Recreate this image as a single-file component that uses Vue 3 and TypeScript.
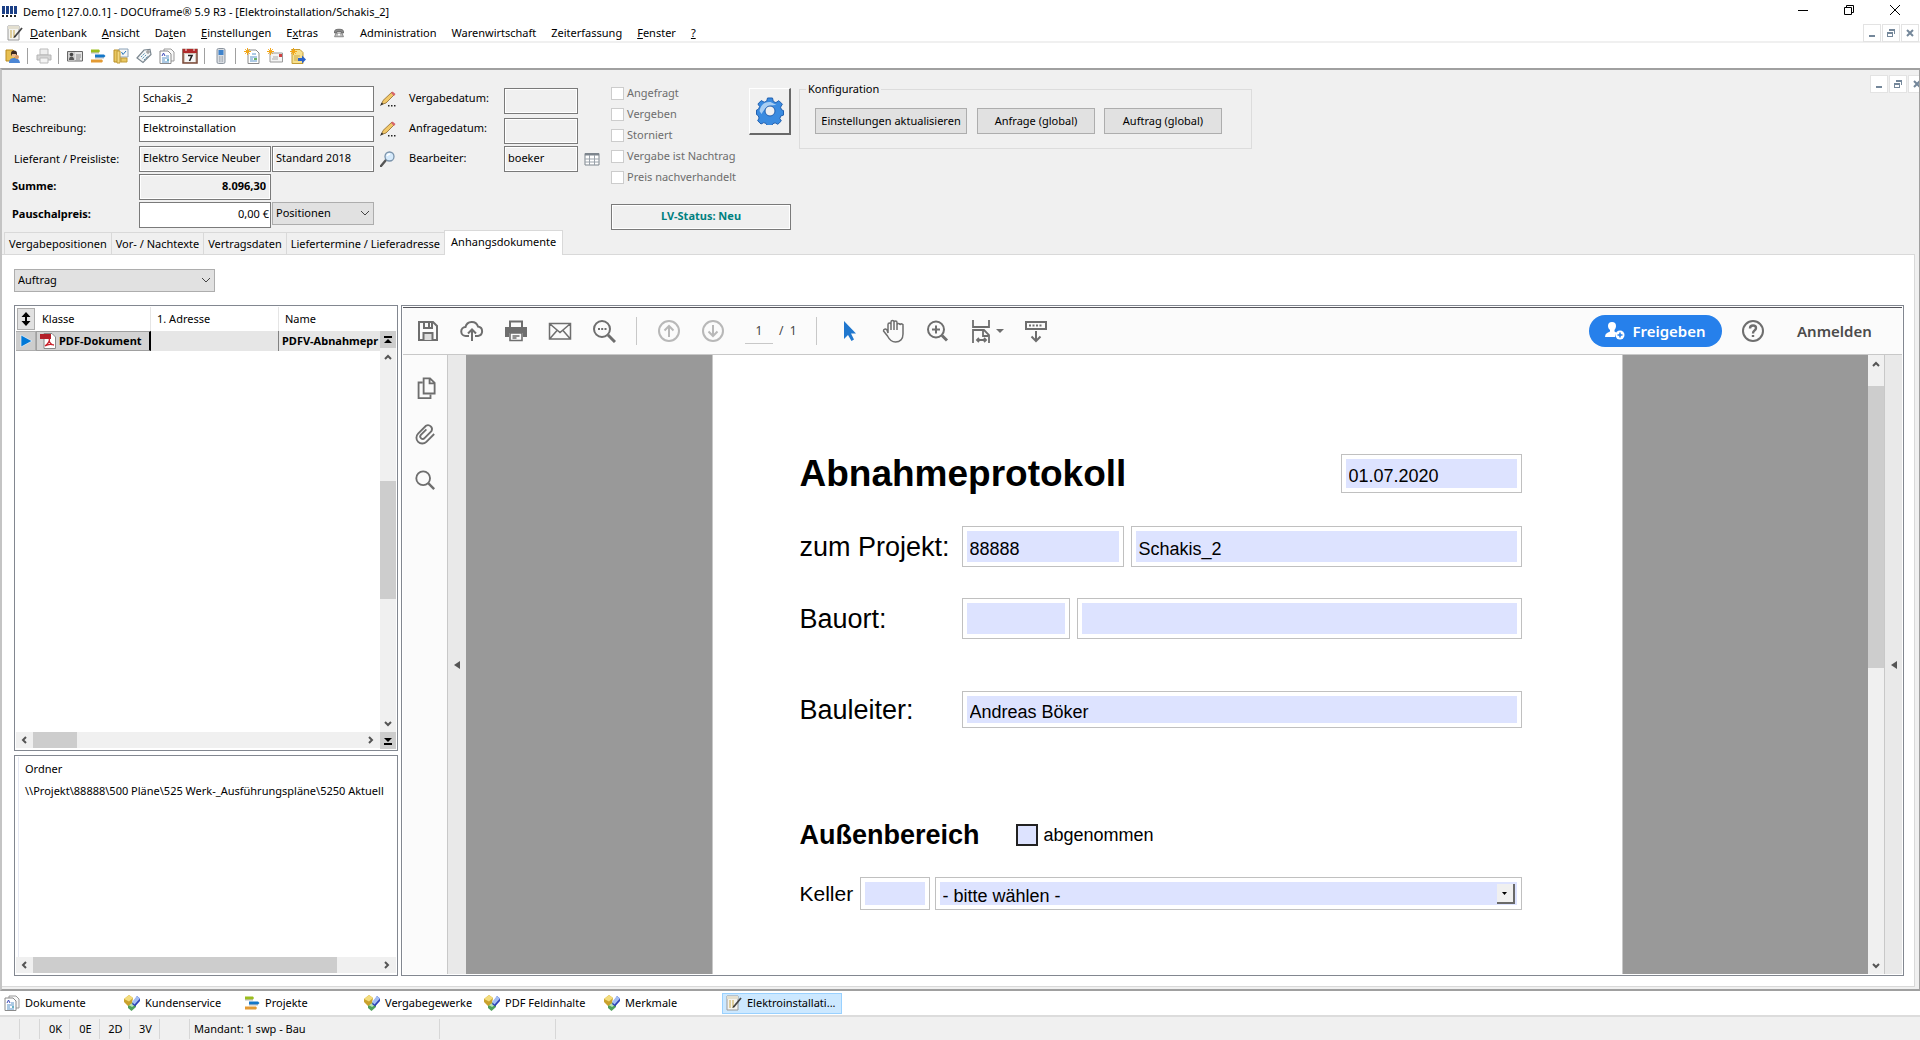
<script setup lang="ts">
import { ref } from 'vue'

interface MenuEntry { before: string; key: string; after: string; icon?: string }
interface TaskEntry { label: string; icon: string }

const icons: Record<string, string> = {
  note: '<path d="M1 1h11v14H1z" fill="#f4f4f0" stroke="#9a9a9a"/><path d="M1 1h11v3H1z" fill="#e3dfd0"/><path d="M3 6h6M3 8h6M3 10h5M3 12h4" stroke="#c9a94a" stroke-dasharray="2 1"/><path d="M8 11.500 15 3" stroke="#444" stroke-width="1.800"/><path d="m6.500 13 1-2.500L9 12z" fill="#222"/>',
  phone: '<path d="M2 6q0-3 6-3t6 3v2h-3V6H5v2H2z" fill="#8b8b8b" stroke="#555"/><path d="M4 8h8l2 5H2z" fill="#b9b9b9" stroke="#777"/><circle cx="8" cy="10" r="1.500" fill="#fff"/>',
  user: '<path d="M1 2h7l2 2v9H1z" fill="#e8c052" stroke="#b98a1c"/><circle cx="9" cy="5.500" r="3" fill="#3c2a20"/><path d="M7 6h4v3H7z" fill="#e9b98c"/><path d="M4 15q0-5 5-5 5.500 0 6 5z" fill="#4c86d4"/><circle cx="12" cy="9" r="2" fill="#d89a66"/>',
  printer: '<path d="M4 1h8v6H4z" fill="#eee" stroke="#bbb"/><path d="M1 7h14v5H1z" fill="#d5d5d5" stroke="#b5b5b5"/><path d="M4 10h8v5H4z" fill="#f4f4f4" stroke="#bbb"/>',
  card: '<path d="M.5 3.500h15v9.500H.5z" fill="#e4e4e4" stroke="#666"/><path d="M1 4h7v8.500H1z" fill="#cfcfcf"/><circle cx="4.500" cy="6.500" r="1.800" fill="#444"/><path d="M2 12q0-3.500 2.500-3.500T7 12z" fill="#555"/><path d="M9 7h5M9 9h5M9 11h4" stroke="#888"/>',
  bars: '<path d="M1 1.500h8l1 1.500-1 1.500H1z" fill="#9cbd1e"/><path d="M5 6.500h9l1.500 1.500-1.500 1.500H5z" fill="#1477c9"/><path d="M1 11.500h11l1 1.500-1 1.500H1z" fill="#e39a33"/><path d="M1 5h8M5 10h9" stroke="#555" stroke-opacity=".4"/>',
  folder: '<path d="M1 2h6v12H1z" fill="#e9c761" stroke="#b98d25"/><path d="M6 1h9v8H6z" fill="#f5f5f5" stroke="#8ba2b8"/><path d="m8.500 4 1.500 2.500L13 3" stroke="#2573b8" fill="none"/><path d="M4 3h3v12H4z" fill="#f3d983" stroke="#c19a35"/><path d="M8 10h6v4H8z" fill="#e9c761" stroke="#c19a35"/>',
  tag: '<path d="m1 10 7-8 6-.5 1 5-8 8z" fill="#f3f5f6" stroke="#7b8790" stroke-width="1.200"/><circle cx="12" cy="4" r="1.200" fill="#fff" stroke="#777"/><path d="m5 9 4-4M6.500 10.500l4-4M8 12l4-4" stroke="#5a95b5" stroke-dasharray="2 1"/>',
  docs: '<path d="M5 1h7l3 3v9H5z" fill="#f8f8f8" stroke="#999"/><path d="M1 3h8l3 3v9.500H1z" fill="#fff" stroke="#8a8a8a"/><path d="m3 8 1.500-3L6 8" stroke="#3a48b8" fill="none"/><path d="M7 8h3M3 10h7M3 12h3M3 14h7" stroke="#5b94c9"/><path d="M8 11h2v2H8z" fill="#6ab2c4"/>',
  calendar: '<path d="M1 1.500h14v13.500H1z" fill="#d8c9bb" stroke="#7a4a3a" stroke-width="1.500"/><path d="M1 1h14v4H1z" fill="#b12a2a"/><path d="M4 0v3M12 0v3" stroke="#eee"/><path d="M3 6h10v8H3z" fill="#f7f7f7"/><path d="M6 7.500h4L7.500 13" stroke="#222" stroke-width="1.600" fill="none"/>',
  mobile: '<rect x="4" y=".5" width="8" height="15" rx="1.500" fill="#d9dde2" stroke="#8b949e"/><path d="M5.500 2h5v5h-5z" fill="#3f83cc"/><path d="M6 9h4M6 11h4M6 13h4" stroke="#8b949e" stroke-dasharray="1 .5"/>',
  newdoc: '<path d="M4 2h8l3 3v10.500H4z" fill="#fff" stroke="#8a8a8a"/><path d="M8 6h4M6 9h7M6 11h3M6 13h7" stroke="#5b94c9"/><path d="M10 10h3v2h-3z" fill="#6ab26a"/><path d="M3.500 0v7M0 3.500h7M1.200 1.200l4.600 4.600M5.800 1.200 1.200 5.800" stroke="#f2a618"/>',
  newmail: '<path d="M3 5h12.500v9H3z" fill="#f4f4f4" stroke="#999"/><path d="M12 6h3v3h-3z" fill="#d04040"/><path d="M5 11h6M6 9h5" stroke="#aaa"/><path d="M3.500 0v7M0 3.500h7M1.200 1.200l4.600 4.600M5.800 1.200 1.200 5.800" stroke="#f2a618"/>',
  newnote: '<path d="M2 1.500h8l3 3v11H2z" fill="#f7e08f" stroke="#c49d35"/><path d="M4 8h6M4 10h4M4 12h4" stroke="#c9a94a"/><path d="M8 10h4V7.500l4 4-4 4V13H8z" fill="#2b62c9"/><path d="M3.500 0v7M0 3.500h7M1.200 1.200l4.600 4.600M5.800 1.200 1.200 5.800" stroke="#f2a618"/>',
  cubes: '<path d="M4 9.500 8 7l4 2.500V12l-4.500 4L4 13z" fill="#4fa05a"/><path d="m4.500 10 3.500-2 3.500 2-3.500 2z" fill="#b5e0b4"/><path d="m5 0 4 3-1 5-4 3-4-4V4z" fill="#c9a22c"/><path d="m5 0 4 3-4 3.500L0 4z" fill="#f3dc7c"/><path d="m13 1 3 2.500V6l-5 5.500L8 9z" fill="#2b3fb4"/><path d="m13 1 3 2.500-5.500 6L8 7z" fill="#a3bdf3"/>',
  pencil: '<path d="m1.500 13.500 1.500-4L12 1l2.500 2.500L6 12z" fill="#f2c869" stroke="#8f6a2a" stroke-width=".8"/><path d="m11 2 1.500-1.500 3 2.500L14 5z" fill="#d6636b"/><path d="m0 15 1.500-3.500L3.500 13z" fill="#333"/><path d="M8 14h1.500v1.500H8zM11 14h1.500v1.500H11zM14 14h1.500v1.500H14z" fill="#222"/>',
  lens: '<path d="m1 15 5-6" stroke="#555" stroke-width="2.400" stroke-linecap="round"/><circle cx="9.500" cy="5.500" r="4.500" fill="#d6eafb" stroke="#7a93ab" stroke-width="1.300"/><path d="M7 5q1-2 3-2" stroke="#fff" fill="none" stroke-width="1.400"/>',
  grid: '<path d="M1 2.500h14V14H1z" fill="#fff" stroke="#7d858d"/><path d="M1 2h14v2.500H1z" fill="#7d858d"/><path d="M1 8h14M1 11h14M5.500 4v10M10.500 4v10" stroke="#9aa2aa"/>',
  pdf: '<path d="M4 .5h8L15.500 4v11.500H4z" fill="#fff" stroke="#888"/><path d="M0 1h11v5H0z" fill="#b3202a"/><path d="M5 13c4-3 5-6 4-8M5 13c3-2 6-2 9-1M9 8c1 2 3 4 5 4" stroke="#c8202a" fill="none" stroke-width="1.300"/>',
  save: '<path d="M3 3h14l4 4v14H3z"/><path d="M8 3v6h8V3M13 4v4" /><path d="M7.500 21v-7h9v7" fill="#ddd"/>',
  cloud: '<path d="M9 17H6a4.500 4.500 0 0 1-.5-9 6.500 6.500 0 0 1 12.500-.5A4.800 4.800 0 0 1 18 17h-3M12 22V11M8 14.500l4-4 4 4"/>',
  print: '<path d="M6 8V2.500h12V8"/><path d="M1 8h22v10h-4v-4H5v4H1z" fill="#6e6e6e" stroke="none"/><path d="M6 14h12v7.500H6zM8.500 17h7M8.500 19h4" stroke-width="1.600"/>',
  mail: '<path d="M1.500 4.500h21v15.500h-21zM2 5l10 8.500L22 5M2 19.500l7-8M22 19.500l-7-8" stroke-width="1.500"/>',
  findtext: '<circle cx="10" cy="10" r="8"/><path d="m16 16 7 7" stroke-width="3"/><path d="M6 10h2M9.200 10h2M12.500 10h2"/>',
  up: '<circle cx="12" cy="12" r="10"/><path d="M12 18V7M7.500 11.500 12 7l4.500 4.500"/>',
  down: '<circle cx="12" cy="12" r="10"/><path d="M12 6v11M7.500 12.500 12 17l4.500-4.500"/>',
  cursor: '<path d="M7 2v18l4-4 3.500 6 2.500-1.500-3-6h5z" fill="#2077ce" stroke="none"/>',
  hand: '<path d="M7 14V5.500a1.500 1.500 0 0 1 3 0V11 3a1.500 1.500 0 0 1 3 0v8-7.500a1.500 1.500 0 0 1 3 0V11 6a1.500 1.500 0 0 1 3 0 1.500 1.500 0 0 1 3 1v8c0 5-3 8-7.500 8-4 0-6-2-8-6l-4-5c0-2 2-2.500 3.500-1z" stroke-width="1.500"/>',
  zoomin: '<circle cx="11" cy="10.500" r="8"/><path d="m17 16.500 5 5" stroke-width="3"/><path d="M7 10.500h8M11 6.500v8"/>',
  fit: '<path d="M4 1v7h16V1M4 24V11h11l5 5v8M14 12v5h5M8 21h9M10 19l-2 2 2 2M15 19l2 2-2 2" stroke-width="1.800"/>',
  scroll: '<path d="M2 3h20v7H2z"/><path d="M5 6.500h14" stroke-dasharray="2 1.500"/><path d="M12 12v10M7.500 17.500 12 22l4.500-4.500"/>',
  help: '<circle cx="12" cy="12" r="10"/><path d="M9 9.500q0-3 3-3t3 2.500q0 1.500-1.500 2.500T12 14.500M12 16v2" stroke-width="2.400"/>',
  pages: '<path d="M9.500 6H5v17h13v-4"/><path d="M10.500 1.500h7l5 5V18h-12zM17 2v5h5"/>',
  clip: '<path d="m22 12-8.500 8.500a6.200 6.200 0 0 1-9-9l8.500-8.500a4.400 4.400 0 0 1 6 6l-7.500 7.500a2.500 2.500 0 0 1-4-3.500l6-6" />',
  search: '<circle cx="10" cy="10" r="7.500"/><path d="m15.500 15.500 6.500 6.500" stroke-width="2.600"/>',
}

const menu: MenuEntry[] = [
  { before: '', key: 'D', after: 'atenbank' },
  { before: '', key: 'A', after: 'nsicht' },
  { before: 'Da', key: 't', after: 'en' },
  { before: '', key: 'E', after: 'instellungen' },
  { before: 'E', key: 'x', after: 'tras' },
  { before: '', key: '', after: '', icon: 'phone' },
  { before: 'Administration', key: '', after: '' },
  { before: 'Warenwirtschaft', key: '', after: '' },
  { before: 'Zeiterfassung', key: '', after: '' },
  { before: '', key: 'F', after: 'enster' },
  { before: '', key: '?', after: '' },
]
const toolGroups: string[][] = [
  ['user'],
  ['printer'],
  ['card', 'bars', 'folder', 'tag', 'docs', 'calendar'],
  ['mobile'],
  ['newdoc', 'newmail', 'newnote'],
]
const checks = ['Angefragt', 'Vergeben', 'Storniert', 'Vergabe ist Nachtrag', 'Preis nachverhandelt']
const tabs = ['Vergabepositionen', 'Vor- / Nachtexte', 'Vertragsdaten', 'Liefertermine / Lieferadresse', 'Anhangsdokumente']
const activeTab = ref('Anhangsdokumente')
const tasks: TaskEntry[] = [
  { label: 'Dokumente', icon: 'docs' },
  { label: 'Kundenservice', icon: 'cubes' },
  { label: 'Projekte', icon: 'bars' },
  { label: 'Vergabegewerke', icon: 'cubes' },
  { label: 'PDF Feldinhalte', icon: 'cubes' },
  { label: 'Merkmale', icon: 'cubes' },
]
const fileTools = ['save', 'cloud', 'print', 'mail', 'findtext']
const sideTools = ['pages', 'clip', 'search']

const name = ref('Schakis_2')
const description = ref('Elektroinstallation')
const flatPrice = ref('0,00 €')
</script>

<template>
  <div class="app">
    <header class="titlebar">
      <svg class="logo" viewBox="0 0 16 12"><path d="M0 0h3v8H0zM4 0h3v8H4zM8 0h3v8H8zM12 0h3v8h-3z" fill="#1b3f86" /><path d="M0 9h2v2H0zM4 9h2v2H4zM8 9h2v2H8zM12 9h2v2h-2z" fill="#222" /></svg>
      <span class="title">Demo [127.0.0.1] - DOCUframe® 5.9 R3 - [Elektroinstallation/Schakis_2]</span>
      <div class="winbuttons">
        <button type="button" aria-label="Minimieren"><svg viewBox="0 0 10 10"><path d="M0 5.500h10" stroke="#000" /></svg></button>
        <button type="button" aria-label="Verkleinern"><svg viewBox="0 0 10 10"><path d="M.5 2.500h7v7h-7zM2.500 2V.5h7v7H8" fill="none" stroke="#000" /></svg></button>
        <button type="button" aria-label="Schließen"><svg viewBox="0 0 10 10"><path d="m0 0 10 10M10 0 0 10" stroke="#000" /></svg></button>
      </div>
    </header>

    <nav class="menubar">
      <svg class="i16 menuicon" viewBox="0 0 16 16" v-html="icons.note"></svg>
      <button v-for="(m, i) in menu" :key="i" type="button" class="menuitem" :aria-label="m.icon ? 'Telefon' : undefined">
        <svg v-if="m.icon" class="i12" viewBox="0 0 16 16" v-html="icons[m.icon]"></svg>
        <template v-else>{{ m.before }}<u v-if="m.key">{{ m.key }}</u>{{ m.after }}</template>
      </button>
      <div class="mdi">
        <button type="button" aria-label="Fenster minimieren"><svg viewBox="0 0 8 8"><path d="M1 6h6v2H1z" /></svg></button>
        <button type="button" aria-label="Fenster verkleinern"><svg viewBox="0 0 8 8"><path d="M2 0h6v5H7V2H2zM0 3h6v5H0zm1 2v2h4V5z" fill-rule="evenodd" /></svg></button>
        <button type="button" aria-label="Fenster schließen"><svg viewBox="0 0 8 8"><path d="m1 1 6 6M7 1 1 7" class="cross" /></svg></button>
      </div>
    </nav>

    <div class="toolbar">
      <div v-for="(g, i) in toolGroups" :key="i" class="toolgroup">
        <button v-for="t in g" :key="t" type="button" :aria-label="t"><svg class="i16" viewBox="0 0 16 16" v-html="icons[t]"></svg></button>
      </div>
    </div>

    <main class="workspace">
      <div class="form">
        <div class="col main-col">
          <div class="row">
            <label for="f-name">Name:</label>
            <input id="f-name" v-model="name" class="field wide">
            <button type="button" class="iconbtn" aria-label="Name bearbeiten"><svg class="i16" viewBox="0 0 16 16" v-html="icons.pencil"></svg></button>
          </div>
          <div class="row">
            <label for="f-desc">Beschreibung:</label>
            <input id="f-desc" v-model="description" class="field wide">
            <button type="button" class="iconbtn" aria-label="Beschreibung bearbeiten"><svg class="i16" viewBox="0 0 16 16" v-html="icons.pencil"></svg></button>
          </div>
          <div class="row tight">
            <label for="f-sup" class="inset">Lieferant / Preisliste:</label>
            <input id="f-sup" class="field mid ro" value="Elektro Service Neuber" readonly>
            <input class="field short ro" value="Standard 2018" aria-label="Preisliste" readonly>
            <button type="button" class="iconbtn" aria-label="Lieferant suchen"><svg class="i16" viewBox="0 0 16 16" v-html="icons.lens"></svg></button>
          </div>
          <div class="row tight">
            <label for="f-sum" class="strong">Summe:</label>
            <input id="f-sum" class="field mid ro strong num" value="8.096,30" readonly>
          </div>
          <div class="row tight">
            <label for="f-flat" class="strong">Pauschalpreis:</label>
            <input id="f-flat" v-model="flatPrice" class="field mid num flush">
            <span class="combo short">
              <select aria-label="Pauschalpreis für"><option>Positionen</option></select>
              <svg viewBox="0 0 10 6"><path d="m1 1 4 4 4-4" /></svg>
            </span>
          </div>
        </div>

        <div class="col date-col">
          <div class="row">
            <label for="f-vd" class="raised">Vergabedatum:</label>
            <input id="f-vd" class="field date ro" readonly>
          </div>
          <div class="row tight">
            <label for="f-ad" class="raised">Anfragedatum:</label>
            <input id="f-ad" class="field date ro" readonly>
          </div>
          <div class="row">
            <label for="f-be">Bearbeiter:</label>
            <input id="f-be" class="field date ro" value="boeker" readonly>
            <button type="button" class="iconbtn" aria-label="Bearbeiter wählen"><svg class="i16" viewBox="0 0 16 16" v-html="icons.grid"></svg></button>
          </div>
        </div>

        <div class="col state-col">
          <div class="state-top">
            <div class="checks">
              <label v-for="c in checks" :key="c"><input type="checkbox" disabled>{{ c }}</label>
            </div>
            <button type="button" class="gear" aria-label="Aktionen">
              <svg viewBox="0 0 28 28">
                <path d="m11.500 1 5 0 .8 3.500 2.600 1.100 3-1.900 3.500 3.500-1.900 3 1.100 2.600 1.900.8v4.500l-2.600.8-1.100 2.600 1.500 2.500-3.500 3.300-2.700-1.500-2.400 1-1 2.200h-4.500l-.9-2.400-2.500-1-2.800 1.400-3.300-3.200 1.400-2.800-1-2.500-1.600-.9v-4.500l2-.9 1.100-2.600-1.700-2.600 3.300-3.400 3 1.600 2.500-1z" fill="#3a8be0" stroke="#2160b0" />
                <path d="M3.500 14c1-6 5-9.500 11-9l6 3c-7-.5-12 3-15 9z" fill="#b5d5f5" opacity=".9" />
                <circle cx="14" cy="14" r="5" fill="#f0f0f0" stroke="#2160b0" />
              </svg>
            </button>
          </div>
          <output class="status">LV-Status: Neu</output>
        </div>

        <fieldset class="config">
          <legend>Konfiguration</legend>
          <button type="button" class="push big">Einstellungen aktualisieren</button>
          <button type="button" class="push">Anfrage (global)</button>
          <button type="button" class="push last">Auftrag (global)</button>
        </fieldset>

        <div class="mdi child">
          <button type="button" aria-label="Minimieren"><svg viewBox="0 0 8 8"><path d="M1 6h6v2H1z" /></svg></button>
          <button type="button" aria-label="Verkleinern"><svg viewBox="0 0 8 8"><path d="M2 0h6v5H7V2H2zM0 3h6v5H0zm1 2v2h4V5z" fill-rule="evenodd" /></svg></button>
          <button type="button" aria-label="Schließen"><svg viewBox="0 0 8 8"><path d="m1 1 6 6M7 1 1 7" class="cross" /></svg></button>
        </div>
      </div>

      <div class="tabs" role="tablist">
        <button v-for="t in tabs" :key="t" type="button" role="tab" :aria-selected="t === activeTab" :class="{ active: t === activeTab }" @click="activeTab = t">{{ t }}</button>
      </div>

      <section class="tabpage">
        <span class="combo type">
          <select aria-label="Dokumentart"><option>Auftrag</option></select>
          <svg viewBox="0 0 10 6"><path d="m1 1 4 4 4-4" /></svg>
        </span>
        <div class="split">
          <div class="left">
            <div class="box list">
              <div class="list-body">
                <div class="tablewrap">
                  <table>
                    <colgroup><col class="c0"><col class="c1"><col class="c2"><col class="c3"></colgroup>
                    <thead>
                      <tr>
                        <th><button type="button" class="sort" aria-label="Sortieren"><svg viewBox="0 0 10 14"><path d="M5 0 9.500 5H6v4h3.500L5 14 .5 9H4V5H.5z" /></svg></button></th>
                        <th>Klasse</th><th>1. Adresse</th><th>Name</th>
                      </tr>
                    </thead>
                    <tbody>
                      <tr>
                        <td class="mark"><svg viewBox="0 0 12 12"><path d="m1 0 11 6-11 6z" fill="#0078d7" stroke="#fff" stroke-width=".6" /></svg></td>
                        <td class="sel"><span><svg class="i16" viewBox="0 0 16 16" v-html="icons.pdf"></svg>PDF-Dokument</span></td>
                        <td></td>
                        <td class="doc">PDFV-Abnahmepr</td>
                      </tr>
                    </tbody>
                  </table>
                </div>
                <div class="rail">
                  <button type="button" class="jump" aria-label="Zum Anfang"><svg viewBox="0 0 8 8"><path d="M0 0h8v2H0zM4 3l4 4H0z" /></svg></button>
                  <div class="vbar">
                    <svg viewBox="0 0 8 6"><path d="m1 5 3-3 3 3" /></svg>
                    <div class="track"><i class="list-thumb"></i></div>
                    <svg viewBox="0 0 8 6"><path d="m1 1 3 3 3-3" /></svg>
                  </div>
                </div>
              </div>
              <div class="list-foot">
                <div class="hbar">
                  <svg viewBox="0 0 6 8"><path d="M5 1 2 4l3 3" /></svg>
                  <div class="track"><i class="small-thumb"></i></div>
                  <svg viewBox="0 0 6 8"><path d="m1 1 3 3-3 3" /></svg>
                </div>
                <button type="button" class="jump" aria-label="Zum Ende"><svg viewBox="0 0 8 8"><path d="M0 1h8L4 5zM0 6h8v2H0z" /></svg></button>
              </div>
            </div>
            <div class="box folders">
              <div class="folder-body">
                <div class="folder-head">Ordner</div>
                <div class="folder-row">\\Projekt\88888\500 Pläne\525 Werk-_Ausführungspläne\5250 Aktuell</div>
              </div>
              <div class="hbar">
                <svg viewBox="0 0 6 8"><path d="M5 1 2 4l3 3" /></svg>
                <div class="track"><i class="big-thumb"></i></div>
                <svg viewBox="0 0 6 8"><path d="m1 1 3 3-3 3" /></svg>
              </div>
            </div>
          </div>

          <div class="box viewer">
            <div class="pdfbar">
              <button v-for="t in fileTools" :key="t" type="button" class="tool" :aria-label="t"><svg viewBox="0 0 24 24" v-html="icons[t]"></svg></button>
              <span class="vsep"></span>
              <button type="button" class="tool faint" aria-label="Vorherige Seite"><svg viewBox="0 0 24 24" v-html="icons.up"></svg></button>
              <button type="button" class="tool faint" aria-label="Nächste Seite"><svg viewBox="0 0 24 24" v-html="icons.down"></svg></button>
              <input class="pageno" value="1" aria-label="Seite"><span class="pagecount">/&nbsp; 1</span>
              <span class="vsep second"></span>
              <button type="button" class="tool" aria-label="Auswahl"><svg viewBox="0 0 24 24" v-html="icons.cursor"></svg></button>
              <button type="button" class="tool" aria-label="Hand"><svg viewBox="0 0 24 24" v-html="icons.hand"></svg></button>
              <button type="button" class="tool" aria-label="Zoom"><svg viewBox="0 0 24 24" v-html="icons.zoomin"></svg></button>
              <button type="button" class="tool fit" aria-label="Breite anpassen"><svg viewBox="0 0 24 24" v-html="icons.fit"></svg><svg class="caret" viewBox="0 0 8 4"><path d="M0 0h8L4 4z" /></svg></button>
              <button type="button" class="tool" aria-label="Bildlauf"><svg viewBox="0 0 24 24" v-html="icons.scroll"></svg></button>
              <span class="grow"></span>
              <button type="button" class="share">
                <svg viewBox="0 0 20 18"><path d="M7 0a4 4 0 0 1 4 4c0 2-1 3-1.500 4v1.500L12 11a5 5 0 0 0-2 4H0q0-3 2-4l3-1.500V8C4 7 3 6 3 4a4 4 0 0 1 4-4z" fill="#fff" /><circle cx="15" cy="13" r="4.500" fill="#fff" /><path d="M15 10.500v5M12.500 13h5" stroke="#2680eb" stroke-width="1.500" /></svg>
                Freigeben
              </button>
              <button type="button" class="tool help" aria-label="Hilfe"><svg viewBox="0 0 24 24" v-html="icons.help"></svg></button>
              <a href="#" class="signin">Anmelden</a>
            </div>
            <div class="pdfmain">
              <div class="side">
                <button v-for="t in sideTools" :key="t" type="button" :aria-label="t"><svg viewBox="0 0 24 24" v-html="icons[t]"></svg></button>
              </div>
              <div class="strip"><svg viewBox="0 0 6 8"><path d="M6 0v8L0 4z" /></svg></div>
              <div class="desk">
                <div class="page">
                  <div class="prow r-title">
                    <h1>Abnahmeprotokoll</h1>
                    <span class="pf w-date"><input value="01.07.2020" aria-label="Datum"></span>
                  </div>
                  <div class="prow r-project">
                    <label for="p-nr">zum Projekt:</label>
                    <span class="pf w-nr"><input id="p-nr" value="88888"></span>
                    <span class="pf rest"><input value="Schakis_2" aria-label="Projektname"></span>
                  </div>
                  <div class="prow r-place">
                    <label for="p-plz">Bauort:</label>
                    <span class="pf w-plz"><input id="p-plz"></span>
                    <span class="pf rest"><input aria-label="Ort"></span>
                  </div>
                  <div class="prow r-lead">
                    <label for="p-lead">Bauleiter:</label>
                    <span class="pf rest"><input id="p-lead" value="Andreas Böker"></span>
                  </div>
                  <div class="prow r-out">
                    <h2>Außenbereich</h2>
                    <label class="accept"><input type="checkbox">abgenommen</label>
                  </div>
                  <div class="prow r-cellar">
                    <label for="p-cel">Keller</label>
                    <span class="pf w-cel"><input id="p-cel"></span>
                    <span class="pf rest">
                      <select aria-label="Zustand Keller"><option>- bitte wählen -</option></select>
                      <span class="drop"><svg viewBox="0 0 5 3"><path d="M0 0h5L2.500 3z" /></svg></span>
                    </span>
                  </div>
                </div>
              </div>
              <div class="vbar pdfscroll">
                <svg viewBox="0 0 8 6"><path d="m1 5 3-3 3 3" /></svg>
                <div class="track"><i class="pdf-thumb"></i></div>
                <svg viewBox="0 0 8 6"><path d="m1 1 3 3 3-3" /></svg>
              </div>
              <div class="strip right"><svg viewBox="0 0 6 8"><path d="M6 0v8L0 4z" /></svg></div>
            </div>
          </div>
        </div>
      </section>
    </main>

    <nav class="tasks">
      <button v-for="t in tasks" :key="t.label" type="button"><svg class="i16" viewBox="0 0 16 16" v-html="icons[t.icon]"></svg>{{ t.label }}</button>
      <button type="button" class="current"><svg class="i16" viewBox="0 0 16 16" v-html="icons.note"></svg>Elektroinstallati...</button>
    </nav>

    <footer class="statusbar">
      <span class="s20"></span><span class="s20"></span>
      <span class="s30">0K</span><span class="s30">0E</span><span class="s30">2D</span><span class="s30">3V</span>
      <span class="s30"></span><span class="mandant">Mandant: 1 swp - Bau</span><span class="s116"></span>
    </footer>
  </div>
</template>

<style>
body { margin: 0; }
</style>

<style scoped>
* { box-sizing: border-box; }
.app {
  display: flex; flex-direction: column; min-height: 100vh; overflow: hidden;
  background: #fff; color: #000; font-family: "Noto Sans", "Open Sans", sans-serif; font-size: 11px; line-height: 16px;
}
button, input, select { font: inherit; color: inherit; margin: 0; }
button { background: none; border: 0; padding: 0; }
svg { display: block; flex: none; }
.i16 { width: 16px; height: 16px; }
.i12 { width: 12px; height: 12px; }

.titlebar { display: flex; align-items: center; height: 24px; padding-left: 2px; }
.logo { width: 16px; height: 12px; }
.title { margin-left: 5px; white-space: nowrap; }
.winbuttons { margin-left: auto; display: flex; align-self: flex-start; padding-right: 2px; }
.winbuttons button { width: 46px; height: 20px; display: grid; place-items: center; }
.winbuttons svg { width: 10px; height: 10px; }

.menubar { display: flex; align-items: center; height: 19px; padding-left: 7px; border-bottom: 2px solid #f0f0f0; }
.menuicon { margin-right: 7px; }
.menuitem { margin-right: 15px; white-space: nowrap; }
.mdi { display: flex; gap: 1px; margin-left: auto; padding-right: 1px; }
.mdi button { width: 18px; height: 18px; border: 1px solid #e3e3e3; background: #fff; display: grid; place-items: center; }
.mdi svg { width: 8px; height: 8px; fill: #74879a; }
.cross { stroke: #74879a; stroke-width: 2; }
.mdi.child { align-self: flex-start; margin-right: -7px; padding: 0; }

.toolbar { display: flex; align-items: center; height: 25px; padding-left: 5px; }
.toolgroup { display: flex; gap: 7px; }
.toolgroup + .toolgroup { margin-left: 6px; padding-left: 8px; border-left: 1px solid #a0a0a0; }

.workspace {
  flex: 1; display: flex; flex-direction: column; min-height: 0; background: #f0f0f0;
  border: 2px solid #a0a0a0; border-right-width: 1px; border-left-color: #c4c4c4; overflow: hidden;
}
.form { display: flex; align-items: flex-start; padding: 5px 0 0 10px; height: 160px; }
.col { display: flex; flex-direction: column; }
.row { display: flex; align-items: center; height: 26px; margin-bottom: 4px; }
.row.tight { margin-bottom: 2px; }
.main-col { padding-top: 11px; }
.row label { padding-bottom: 2px; white-space: nowrap; }
.row .raised { padding-bottom: 6px; }
.main-col label { width: 127px; }
.main-col .inset { padding: 0 0 0 2px; }
.strong { font-weight: 700; }
.field { height: 26px; border: 1px solid #7a7a7a; background: #fff; padding: 0 3px 3px; outline: 0; }
.field.ro { background: #f0f0f0; box-shadow: inset 0 0 0 1px #fff; }
.wide { width: 235px; }
.mid { width: 132px; margin-right: 1px; }
.short { width: 102px; }
.num { text-align: right; padding-right: 4px; }
.flush { padding-right: 1px; }
.date { width: 74px; }
.iconbtn { margin-left: 6px; }
.combo { position: relative; display: block; height: 23px; }
.combo select { appearance: none; display: block; width: 100%; height: 100%; border: 1px solid #adadad; border-radius: 0; background: #e1e1e1; padding: 0 3px 1px; }
.combo svg { position: absolute; right: 4px; top: 8px; width: 10px; height: 6px; fill: none; stroke: #444; pointer-events: none; }
.main-col .combo { align-self: flex-start; }

.date-col { padding: 13px 0 0 13px; }
.date-col label { width: 95px; }

.state-col { width: 180px; margin-left: 11px; padding-top: 13px; }
.state-top { display: flex; justify-content: space-between; align-items: flex-start; height: 116px; }
.checks { display: flex; flex-direction: column; gap: 5px; margin-top: -3px; }
.checks label { display: flex; align-items: center; gap: 3px; height: 16px; color: #6d6d6d; white-space: nowrap; }
.checks input { appearance: none; width: 13px; height: 13px; border: 1px solid #ccc; background: #fff; }
.gear { width: 42px; height: 47px; display: grid; place-items: center; border: 1px solid #fff; border-right: 2px solid #696969; border-bottom: 2px solid #696969; }
.gear svg { width: 28px; height: 28px; }
.status { display: block; height: 26px; border: 1px solid #7a7a7a; box-shadow: inset 0 0 0 1px #fff; text-align: center; line-height: 22px; font-weight: 700; color: #008080; }

.config { display: flex; width: 453px; height: 68px; margin: 6px 0 0 8px; padding: 11px 15px; border: 1px solid #dcdcdc; min-width: 0; }
.config legend { padding: 0 2px; margin-left: -9px; }
.push { width: 118px; height: 26px; margin-left: 10px; border: 1px solid #adadad; background: #e1e1e1; white-space: nowrap; }
.push.big { width: 152px; margin-left: 0; }
.push.last { margin-left: 9px; }

.tabs { display: flex; align-items: flex-end; padding-left: 2px; margin-bottom: -1px; height: 25px; position: relative; }
.tabs button { height: 23px; padding: 0 4px; border: 1px solid #d9d9d9; border-right: 0; white-space: nowrap; }
.tabs .active { height: 25px; padding: 0 6px 3px; background: #fff; border-right: 1px solid #d9d9d9; border-bottom: 0; }

.tabpage { flex: 1; display: flex; flex-direction: column; min-height: 0; margin: 0 4px 2px 0; padding: 14px 10px 10px 12px; background: #fff; border: 1px solid #d9d9d9; border-left: 0; }
.combo.type { width: 201px; margin-bottom: 13px; }
.split { flex: 1; display: flex; gap: 3px; min-height: 660px; }
.left { width: 384px; flex: none; display: flex; flex-direction: column; gap: 4px; }
.box { border: 1px solid #828790; background: #fff; min-width: 0; }
.list { flex: 1; display: flex; flex-direction: column; padding: 1px; }
.list-body { flex: 1; display: flex; }
.tablewrap { flex: 1; min-width: 0; overflow: hidden; }
table { width: 364px; table-layout: fixed; border-collapse: separate; border-spacing: 0; }
.c0 { width: 20px; }
.c1 { width: 115px; }
.c2 { width: 128px; }
.c3 { width: 101px; }
th { height: 24px; padding: 0 0 0 6px; text-align: left; font-weight: 400; border-right: 1px solid #e5e5e5; }
th:first-child { padding: 0 0 0 1px; border: 0; }
th:last-child { border: 0; }
.sort { width: 18px; height: 22px; display: grid; place-items: center; background: #e1e1e1; border: 1px solid #adadad; }
.sort svg { width: 10px; height: 14px; }
td { height: 20px; padding: 0; background: #e6e6e6; font-weight: 700; white-space: nowrap; overflow: hidden; border-right: 1px solid #828282; }
td.mark { background: #cdcdcd; border: 1px solid #adadad; border-left: 0; }
.mark svg { width: 12px; height: 12px; margin-left: 4px; }
td.sel { background: #d3d3d3; border: 1px solid #a0a0a0; border-right: 2px solid #000; }
.sel span { display: flex; align-items: center; gap: 3px; padding-left: 3px; }
td.doc { padding-left: 3px; border: 0; }
.rail { width: 16px; display: flex; flex-direction: column; padding-top: 24px; }
.jump { width: 16px; height: 17px; background: #cdcdcd; display: grid; place-items: center; flex: none; }
.jump svg { width: 8px; height: 8px; }
.vbar { flex: 1; width: 16px; display: flex; flex-direction: column; align-items: center; background: #f0f0f0; }
.vbar svg { width: 8px; height: 6px; margin: 6px 0 5px; fill: none; stroke: #555; stroke-width: 2; }
.track { flex: 1; align-self: stretch; display: flex; min-width: 0; }
.vbar .track { flex-direction: column; }
.track i { display: block; background: #cdcdcd; }
.list-thumb { margin-top: 116px; height: 118px; }
.pdf-thumb { margin-top: 14px; height: 282px; }
.list-foot { display: flex; }
.hbar { flex: 1; height: 16px; display: flex; align-items: center; background: #f0f0f0; }
.hbar svg { width: 6px; height: 8px; margin: 0 6px 0 5px; fill: none; stroke: #555; stroke-width: 2; }
.small-thumb { width: 44px; }
.big-thumb { width: 304px; }
.folders { height: 221px; display: flex; flex-direction: column; padding: 1px 1px 2px; }
.folder-body { flex: 1; margin-left: 2px; border-left: 1px solid #e5e8f2; padding: 4px 0 0 6px; overflow: hidden; white-space: nowrap; }
.folder-head { height: 22px; }
.folders .hbar { flex: none; }

.viewer { flex: 1; display: flex; flex-direction: column; padding: 1px; }
.pdfbar { display: flex; align-items: center; height: 48px; background: #fbfbfb; border-top: 1px solid #55555c; border-bottom: 1px solid #c8c8c8; padding-left: 13px; }
.tool { width: 24px; height: 24px; margin-right: 20px; flex: none; }
.tool svg, .side svg { width: 24px; height: 24px; fill: none; stroke: #6e6e6e; stroke-width: 2; }
.tool.faint svg { stroke: #b8b8b8; }
.vsep { width: 1px; height: 28px; background: #c8c8c8; margin-right: 20px; }
.pageno { width: 28px; height: 26px; border: 0; border-bottom: 1px solid #c8c8c8; background: none; text-align: center; padding: 0; font-size: 12px; color: #444; }
.pagecount { width: 36px; padding-left: 6px; font-size: 12px; color: #444; white-space: nowrap; }
.vsep.second { margin: 0 20px 0 7px; }
.tool.fit { width: 35px; display: flex; align-items: center; gap: 3px; }
.tool .caret { width: 8px; height: 4px; fill: #6e6e6e; stroke: none; }
.grow { flex: 1; }
.share { width: 133px; height: 32px; border-radius: 16px; background: #2680eb; color: #fff; font-size: 15px; font-weight: 600; display: flex; align-items: center; justify-content: center; gap: 7px; margin-right: 19px; }
.share svg { width: 20px; height: 18px; }
.tool.help { margin-right: 32px; }
.signin { width: 105px; font-size: 15px; font-weight: 600; color: #4b4b4b; text-decoration: none; }
.pdfmain { flex: 1; display: flex; min-height: 0; }
.side { width: 45px; background: #fbfbfb; border-right: 1px solid #c8c8c8; padding: 21px 0 0 11px; display: flex; flex-direction: column; gap: 22px; }
.side button { width: 24px; height: 24px; }
.side svg { width: 22px; height: 22px; }
.strip { width: 18px; background: #e9e9e9; display: flex; align-items: center; justify-content: center; }
.strip svg { width: 6px; height: 8px; fill: #555; }
.strip.right { border-left: 1px solid #c8c8c8; }
.desk { flex: 1; min-width: 0; display: flex; justify-content: center; background: #999; overflow: hidden; }
.pdfscroll { flex: none; }
.page { flex: 0 1 911px; background: #fff; border: solid #c8c8c8; border-width: 0 1px; padding: 99px 100px 0 87px; font-family: "Liberation Sans", Arial, sans-serif; font-size: 18px; line-height: 24px; }
.prow { display: flex; align-items: center; gap: 7px; }
.prow label { width: 155px; font-size: 27px; white-space: nowrap; }
h1, h2 { margin: 0; font-weight: 700; white-space: nowrap; }
h1 { font-size: 37px; }
h2 { font-size: 27px; }
.pf { position: relative; display: flex; align-self: stretch; border: 1px solid #c0c0c0; padding: 4px; }
.pf input, .pf select { appearance: none; width: 100%; min-width: 0; border: 0; border-radius: 0; outline: 0; background: #dde3ff; padding: 4px 3px 0; }
.rest { flex: 1; min-width: 0; }
.w-date { width: 181px; margin-left: auto; }
.w-nr { width: 162px; }
.w-plz { width: 108px; }
.w-cel { width: 70px; }
.r-title { height: 39px; margin-bottom: 33px; }
.r-project { height: 41px; margin-bottom: 31px; }
.r-place { height: 41px; margin-bottom: 52px; }
.r-lead { height: 37px; margin-bottom: 91px; }
.r-out { height: 31px; margin-bottom: 27px; gap: 36px; }
.r-cellar { height: 33px; gap: 5px; }
.prow .accept { display: flex; align-items: center; gap: 6px; width: auto; font-size: 18px; }
.accept input { appearance: none; width: 22px; height: 22px; margin: 0; border: 2px solid #222; background: #dde3ff; }
.r-cellar label { width: 55px; font-size: 21px; }
.r-cellar select { padding-top: 2px; }
.drop { position: absolute; right: 6px; top: 6px; width: 18px; height: 20px; background: #f0f0f0; border-right: 2px solid #696969; border-bottom: 2px solid #696969; display: grid; place-items: center; pointer-events: none; }
.drop svg { width: 5px; height: 3px; }

.tasks { display: flex; align-items: center; height: 26px; padding-left: 4px; border-bottom: 2px solid #dcdcdc; }
.tasks button { width: 120px; display: flex; align-items: center; gap: 5px; white-space: nowrap; }
.tasks .current { width: 120px; height: 21px; margin-left: -2px; padding-left: 3px; background: #cce8ff; border: 1px solid #99d1ff; }
.statusbar { display: flex; height: 23px; padding: 2px 0 1px; background: #f0f0f0; }
.statusbar span { border-right: 1px solid #d7d7d7; text-align: center; line-height: 20px; }
.s20 { width: 20px; }
.s30 { width: 30px; padding-left: 2px; }
.statusbar .mandant { width: 250px; text-align: left; padding-left: 4px; }
.s116 { width: 116px; }
</style>
